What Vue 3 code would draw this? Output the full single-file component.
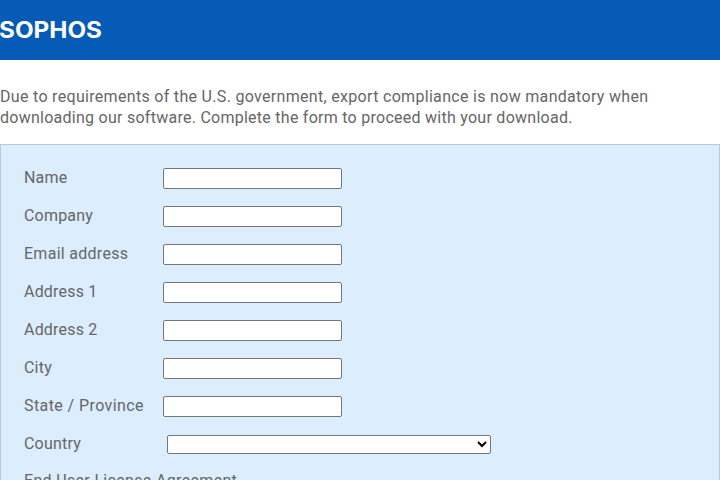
<script setup>
const fields = [
  { id: 'name', label: 'Name' },
  { id: 'company', label: 'Company' },
  { id: 'email', label: 'Email address' },
  { id: 'address1', label: 'Address 1' },
  { id: 'address2', label: 'Address 2' },
  { id: 'city', label: 'City' },
  { id: 'state', label: 'State / Province' },
]
</script>

<template>
  <div class="page">
    <header class="masthead">
      <svg class="logo" width="104" height="30" viewBox="0 0 104 30" role="img" aria-label="Sophos">
        <text x="-1" y="23.5" textLength="103" lengthAdjust="spacingAndGlyphs">SOPHOS</text>
      </svg>
    </header>
    <p class="intro">
      <span class="line first">Due to requirements of the U.S. government, export compliance is now mandatory when</span>
      <span class="line second">downloading our software. Complete the form to proceed with your download.</span>
    </p>
    <form class="panel">
      <div v-for="f in fields" :key="f.id" class="row">
        <label :for="f.id" :class="f.id">{{ f.label }}</label>
        <input :id="f.id" type="text" />
      </div>
      <div class="row">
        <label for="country">Country</label>
        <select id="country"><option></option></select>
      </div>
      <div class="eula">End User License Agreement</div>
    </form>
  </div>
</template>

<style>
body { margin: 0; background: #fff; overflow: hidden; }
</style>

<style scoped>
.page {
  height: 480px;
  overflow: hidden;
  font: 16px/21px Roboto, "Liberation Sans", sans-serif;
  letter-spacing: 0.2px;
  color: #666;
}
.masthead { height: 60px; background: #055bb5; padding-top: 14px; box-sizing: border-box; }
.logo { display: block; overflow: visible; }
.logo text { font: 700 22.5px Inter, sans-serif; fill: #fff; letter-spacing: 0; }
.intro { margin: 0; padding: 26px 0 16px; }
.line { display: block; white-space: nowrap; }
.first { letter-spacing: 0.31px; }
.second { letter-spacing: 0.26px; }
.panel {
  box-sizing: border-box;
  height: 420px;
  padding: 14px 23px;
  border: 1px solid #b4cade;
  background: #dcedfe;
}
.row { display: flex; align-items: center; height: 38px; }
.row label { width: 139px; padding-bottom: 2px; white-space: nowrap; }
.row .email { letter-spacing: 0.28px; }
.row .state { letter-spacing: 0.41px; }
.row input {
  box-sizing: border-box;
  width: 179px;
  height: 21px;
  margin: 1px 0 0;
  padding: 1px 2px;
  border: 1px solid #767676;
  border-radius: 2px;
  background: #fff;
}
.row select {
  box-sizing: border-box;
  width: 324px;
  height: 19px;
  margin: 1px 0 0 4px;
  border: 1px solid #767676;
  border-radius: 2px;
  background-color: #fff;
  color: #000;
  font: 13.333px "Liberation Sans", sans-serif;
}
.eula { padding-top: 7px; letter-spacing: 0.33px; }
</style>
